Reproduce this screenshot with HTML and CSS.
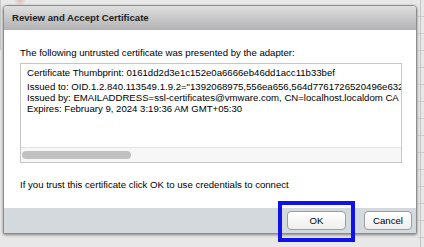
FILE: index.html
```html
<!DOCTYPE html>
<html lang="en">
<head>
    <meta charset="UTF-8">
    <title>Review and Accept Certificate</title>
    <link rel="stylesheet" href="styles.css">
</head>
<body>

    <div class="dialog">
        <div class="dialog-header">Review and Accept Certificate</div>

        <div class="dialog-body">
            <p class="intro">The following untrusted certificate was presented by the adapter:</p>

            <div class="cert-box">
                <div class="cert-lines">
                    <div class="cert-line">Certificate Thumbprint: 0161dd2d3e1c152e0a6666eb46dd1acc11b33bef</div>
                    <div class="cert-line spaced">Issued to: OID.1.2.840.113549.1.9.2="1392068975,556ea656,564d7761726520496e6322", CN=localhost.localdom</div>
                    <div class="cert-line">Issued by: EMAILADDRESS=ssl-certificates@vmware.com, CN=localhost.localdom CA 6A7D2F2A, OU=VMware</div>
                    <div class="cert-line">Expires: February 9, 2024 3:19:36 AM GMT+05:30</div>
                </div>
                <div class="scrollbar">
                    <div class="scroll-thumb"></div>
                </div>
            </div>

            <p class="trust-note">If you trust this certificate click OK to use credentials to connect</p>
        </div>

        <div class="dialog-footer">
            <button class="btn ok-btn">OK</button>
            <button class="btn cancel-btn">Cancel</button>
        </div>
    </div>

    <!-- highlight drawn round the OK button -->
    <div class="highlight"></div>

</body>
</html>
```

FILE: styles.css
```css
body {
    margin: 0;
    width: 424px;
    height: 247px;
    overflow: hidden;
    position: relative;
    font-family: 'Liberation Sans', Arial, sans-serif;
    font-size: 9.6px;
    color: #000;
    background:
        linear-gradient(#c4c4c4, #c4c4c4) 420px 0 / 1px 100% no-repeat,
        repeating-linear-gradient(180deg, transparent 0, transparent 16px, #cdcdcd 16px, #cdcdcd 17px) 418px 0 / 6px 100% no-repeat,
        linear-gradient(#c8c8c8, #c8c8c8) 0 0 / 1px 50px no-repeat,
        radial-gradient(circle at 20px 0, rgba(210, 120, 120, 0.45) 0, rgba(210, 120, 120, 0) 6px),
        #e8e8e8;
    padding-top: 5px;
    padding-left: 3px;
    box-sizing: border-box;
}
.dialog {
    width: 414px;
    height: 229px;
    box-sizing: border-box;
    border: 1px solid #8c8c8c;
    border-radius: 4px 4px 2px 2px;
    background: #fff;
    box-shadow: 0 1px 3px rgba(0, 0, 0, 0.45);
    display: flex;
    flex-direction: column;
    overflow: hidden;
}
.dialog-header {
    height: 24px;
    flex: none;
    box-sizing: border-box;
    padding: 6px 0 0 8px;
    background: linear-gradient(#dfdfdf, #b2b2b4);
    font-weight: bold;
    font-size: 9.6px;
    line-height: 12px;
    color: #222;
}
.dialog-body {
    flex: 1;
    padding: 17px 14px 0 16px;
}
.intro {
    margin: 0 0 4px;
    line-height: 12px;
}
.cert-box {
    width: 382px;
    height: 100px;
    box-sizing: border-box;
    border: 1px solid #c6c6c6;
    display: flex;
    flex-direction: column;
}
.cert-lines {
    flex: 1;
    overflow: hidden;
    padding: 3px 1px 0 6px;
}
.cert-line {
    white-space: nowrap;
    line-height: 11px;
}
.cert-line.spaced {
    margin-top: 3px;
}
.scrollbar {
    height: 14px;
    flex: none;
    border-top: 1px solid #e2e2e2;
    background: #f7f7f7;
    display: flex;
    align-items: center;
    padding-left: 1px;
}
.scroll-thumb {
    width: 109px;
    height: 8px;
    border-radius: 4px;
    background: #c1c1c1;
}
.trust-note {
    margin: 16px 0 0;
    line-height: 12px;
}
.dialog-footer {
    height: 25px;
    flex: none;
    background: #d4d9de;
    display: flex;
    justify-content: flex-end;
    align-items: center;
    gap: 18px;
    padding-right: 4px;
}
.btn {
    height: 19px;
    padding: 0;
    font-family: 'Liberation Sans', Arial, sans-serif;
    font-size: 9.6px;
    color: #000;
    border: 1px solid #9d9d9d;
    border-radius: 4px;
    background: linear-gradient(#ffffff, #eeeeee);
}
.ok-btn {
    width: 59px;
}
.cancel-btn {
    width: 48px;
}
.highlight {
    position: absolute;
    left: 278px;
    top: 201px;
    width: 77px;
    height: 41px;
    box-sizing: border-box;
    border: 4px solid #1111ee;
}
```
